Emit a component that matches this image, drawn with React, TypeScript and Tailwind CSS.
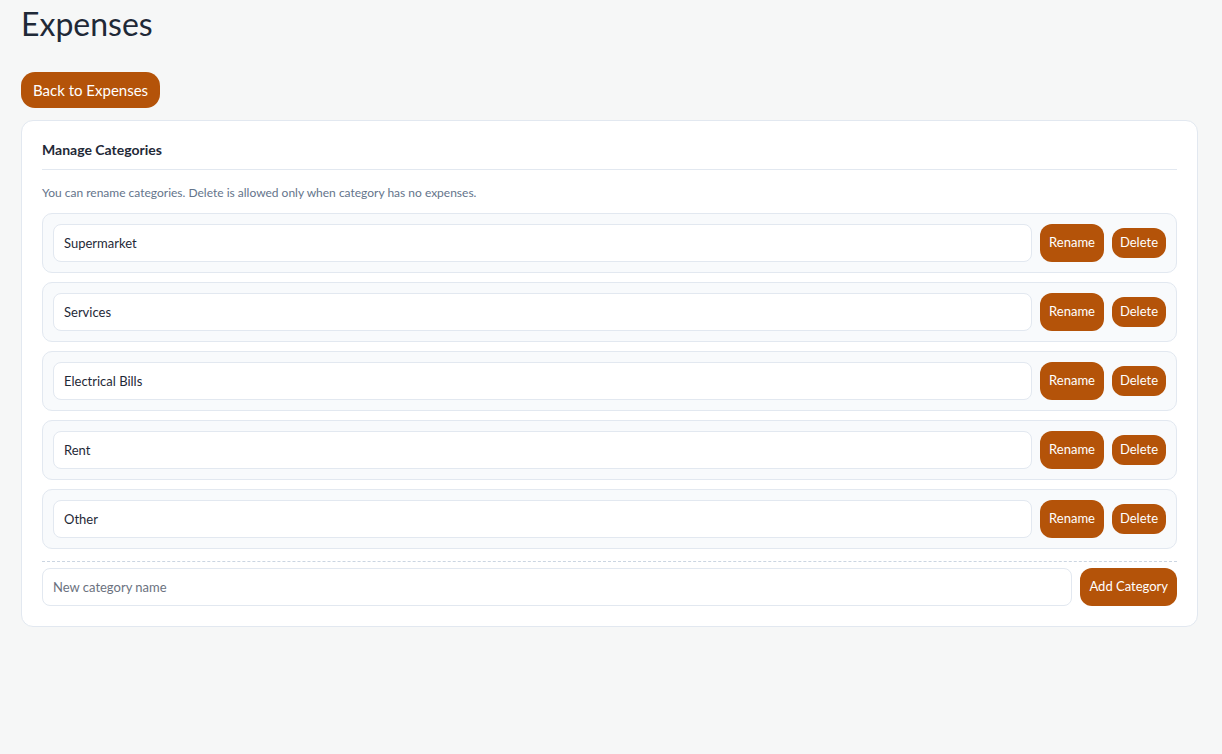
import { useState } from 'react';

const initialCategories = ['Supermarket', 'Services', 'Electrical Bills', 'Rent', 'Other'];

function CategoryRow({ name }: { name: string }) {
  const [value, setValue] = useState(name);
  return (
    <div className="flex items-center gap-[8px] rounded-[10px] border border-[#e2e8f0] bg-[#f8fafc] p-[10px]">
      <input
        value={value}
        onChange={(e) => setValue(e.target.value)}
        className="h-[38px] flex-1 rounded-[8px] border border-[#e2e8f0] bg-white px-[10px] text-[13px] text-[#1f2937] outline-none"
      />
      <button
        type="button"
        className="h-[38px] rounded-[12px] bg-[#b45309] px-[9px] text-[13px] text-white"
      >
        Rename
      </button>
      <button
        type="button"
        className="h-[30px] rounded-[12px] bg-[#b45309] px-[8px] text-[13px] text-white"
      >
        Delete
      </button>
    </div>
  );
}

export default function App() {
  const [newName, setNewName] = useState('');

  return (
    <div
      className="min-h-[754px] bg-[#f6f7f7] pl-[21px] pr-[24px] text-[#1f2937]"
      style={{ fontFamily: 'Lato, "Noto Sans", sans-serif' }}
    >
      <h1 className="pt-[2px] text-[32px] leading-[44px] font-normal text-[#1f2937]">Expenses</h1>

      <button
        type="button"
        className="mt-[26px] h-[36px] rounded-[14px] bg-[#b45309] px-[12px] text-[15px] text-white"
      >
        Back to Expenses
      </button>

      <div className="mt-[12px] rounded-[12px] border border-[#e2e8f0] bg-white p-[20px]">
        <div className="border-b border-[#e2e8f0] pb-[10px]">
          <h2 className="text-[14px] leading-[18px] font-bold text-[#1f2937]">Manage Categories</h2>
        </div>

        <p className="mt-[15px] text-[12px] leading-[16px] text-[#64748b]">
          You can rename categories. Delete is allowed only when category has no expenses.
        </p>

        <div className="mt-[12px] flex flex-col gap-[9px]">
          {initialCategories.map((c) => (
            <CategoryRow key={c} name={c} />
          ))}
        </div>

        <div className="mt-[12px] flex items-center gap-[8px] border-t border-dashed border-[#cbd5e1] pt-[6px]">
          <input
            value={newName}
            onChange={(e) => setNewName(e.target.value)}
            placeholder="New category name"
            className="h-[38px] flex-1 rounded-[8px] border border-[#e2e8f0] bg-white px-[10px] text-[13px] text-[#1f2937] outline-none placeholder:text-[#6b7280]"
          />
          <button
            type="button"
            className="h-[38px] rounded-[12px] bg-[#b45309] px-[9px] text-[13px] text-white"
          >
            Add Category
          </button>
        </div>
      </div>
    </div>
  );
}
